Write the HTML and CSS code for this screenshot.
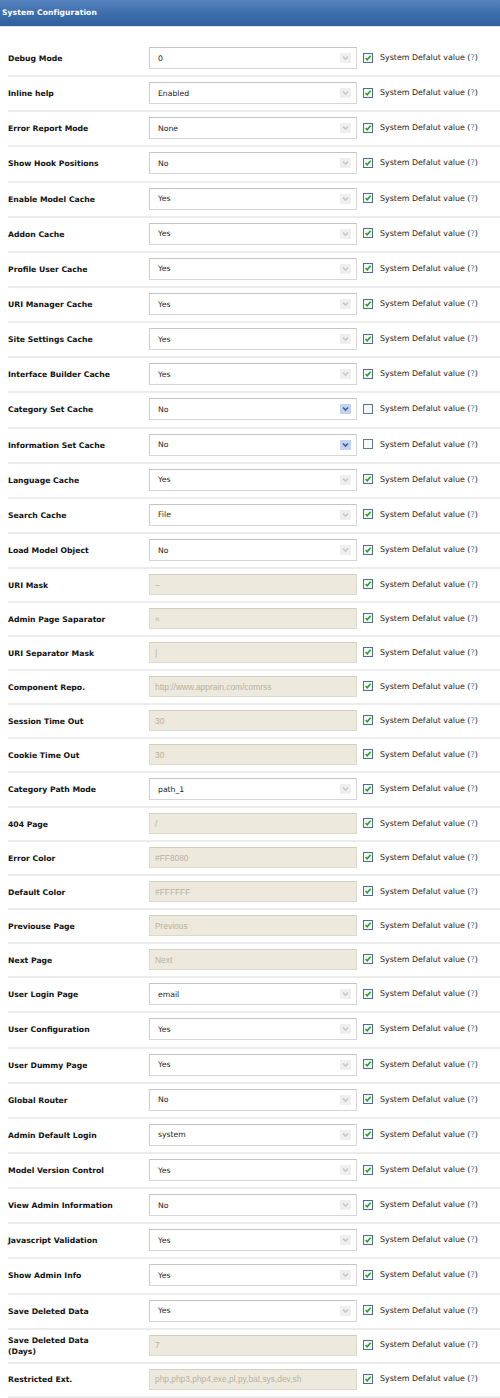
FILE: index.html
```html
<!DOCTYPE html>
<html>
<head>
<meta charset="utf-8">
<link rel="stylesheet" href="styles.css">
</head>
<body>
<div class="panel">
  <div class="header">System Configuration</div>
  <div class="rows" id="rows"></div>
</div>
<script src="app.js"></script>
</body>
</html>
```
FILE: styles.css
```css
html, body { margin: 0; padding: 0; background: #fff; }
body { width: 500px; font-family: "DejaVu Sans", Verdana, sans-serif; }
.header {
  height: 26px;
  line-height: 26px;
  padding-left: 2px;
  color: #fff;
  font-weight: bold;
  font-size: 7.6px;
  background: linear-gradient(#5584bf, #3a6aa8 60%, #2f5f9d);
  border-bottom: 1px solid #d9e3ef;
  letter-spacing: 0.1px;
}
.rows { padding-top: 15px; padding-left: 8px; }
.row {
  display: flex;
  align-items: center;
  height: 35.15px;
  box-sizing: border-box;
  border-bottom: 2px solid #ececec;
}
.row.inp { height: 34px; }
.label {
  width: 141px;
  font-weight: bold;
  font-size: 7.7px;
  line-height: 11px;
  color: #111;
}
.field {
  width: 208px;
  height: 22px;
  box-sizing: border-box;
  display: flex;
  align-items: center;
  margin-top: -1px;
}
.select {
  border: 1px solid #d6d6d6;
  border-top-color: #c4c4c4;
  border-left-color: #cdcdcd;
  background: #fff;
  padding-left: 8px;
  padding-right: 5px;
  font-size: 7.7px;
  color: #222;
}
.select .val { flex: 1; }
.arrow { width: 11px; height: 10px; display: block; }
.text {
  background: #ede9dc;
  border: 1px solid #dcd8ca;
  border-top-color: #d2cebf;
  padding-left: 5px;
  font-family: "Liberation Sans", Arial, sans-serif;
  font-size: 8.4px;
  color: #b7b2a2;
  height: 21px;
}
.def {
  display: flex;
  align-items: center;
  margin-left: 6px;
  font-size: 7.9px;
  color: #222;
  margin-top: -2px;
}
.cb { width: 10px; height: 10px; display: block; margin-right: 7px; }
.q { color: #3b84cc; }
```
FILE: app.js
```js
var rows = [
  ["Debug Mode","s","0"],
  ["Inline help","s","Enabled"],
  ["Error Report Mode","s","None"],
  ["Show Hook Positions","s","No"],
  ["Enable Model Cache","s","Yes"],
  ["Addon Cache","s","Yes"],
  ["Profile User Cache","s","Yes"],
  ["URI Manager Cache","s","Yes"],
  ["Site Settings Cache","s","Yes"],
  ["Interface Builder Cache","s","Yes"],
  ["Category Set Cache","s","No",1],
  ["Information Set Cache","s","No",1],
  ["Language Cache","s","Yes"],
  ["Search Cache","s","File"],
  ["Load Model Object","s","No"],
  ["URI Mask","t","\u2013"],
  ["Admin Page Saparator","t","\u00ab"],
  ["URI Separator Mask","t","|"],
  ["Component Repo.","t","http://www.apprain.com/comrss"],
  ["Session Time Out","t","30"],
  ["Cookie Time Out","t","30"],
  ["Category Path Mode","s","path_1"],
  ["404 Page","t","/"],
  ["Error Color","t","#FF8080"],
  ["Default Color","t","#FFFFFF"],
  ["Previouse Page","t","Previous"],
  ["Next Page","t","Next"],
  ["User Login Page","s","email"],
  ["User Configuration","s","Yes"],
  ["User Dummy Page","s","Yes"],
  ["Global Router","s","No"],
  ["Admin Default Login","s","system"],
  ["Model Version Control","s","Yes"],
  ["View Admin Information","s","No"],
  ["Javascript Validation","s","Yes"],
  ["Show Admin Info","s","Yes"],
  ["Save Deleted Data","s","Yes"],
  ["Save Deleted Data<br>(Days)","t","7"],
  ["Restricted Ext.","t","php,php3,php4,exe,pl,py,bat,sys,dev,sh"]
];
var arrowOff = '<svg class="arrow" viewBox="0 0 11 10"><rect x="0" y="0" width="11" height="10" fill="#efefef"/><path d="M3 3.5 L5.5 6 L8 3.5" fill="none" stroke="#c8c8c8" stroke-width="1.6"/></svg>';
var arrowOn = '<svg class="arrow" viewBox="0 0 11 10"><rect x="0" y="0" width="11" height="10" fill="#c3d2f0"/><path d="M3 3.5 L5.5 6 L8 3.5" fill="none" stroke="#44608f" stroke-width="1.6"/></svg>';
var cbOn = '<svg class="cb" viewBox="0 0 10 10"><rect x="0.5" y="0.5" width="9" height="9" fill="#f4f6f8" stroke="#4f6d94"/><path d="M2.6 5 L4.2 6.8 L7.6 2.8" fill="none" stroke="#21a121" stroke-width="1.5"/></svg>';
var cbOff = '<svg class="cb" viewBox="0 0 10 10"><rect x="0.5" y="0.5" width="9" height="9" fill="#f7f8fa" stroke="#5b7699"/></svg>';
var html = '';
rows.forEach(function(r){
  var field;
  if (r[1] === 's') {
    field = '<div class="field select"><span class="val">' + r[2] + '</span>' + (r[3] ? arrowOn : arrowOff) + '</div>';
  } else {
    field = '<div class="field text">' + r[2] + '</div>';
  }
  html += '<div class="row' + (r[1] === 't' ? ' inp' : '') + '"><div class="label">' + r[0] + '</div>' + field +
    '<div class="def">' + (r[3] ? cbOff : cbOn) + 'System Defalut value (<span class="q">?</span>)</div></div>';
});
document.getElementById('rows').innerHTML = html;
```
